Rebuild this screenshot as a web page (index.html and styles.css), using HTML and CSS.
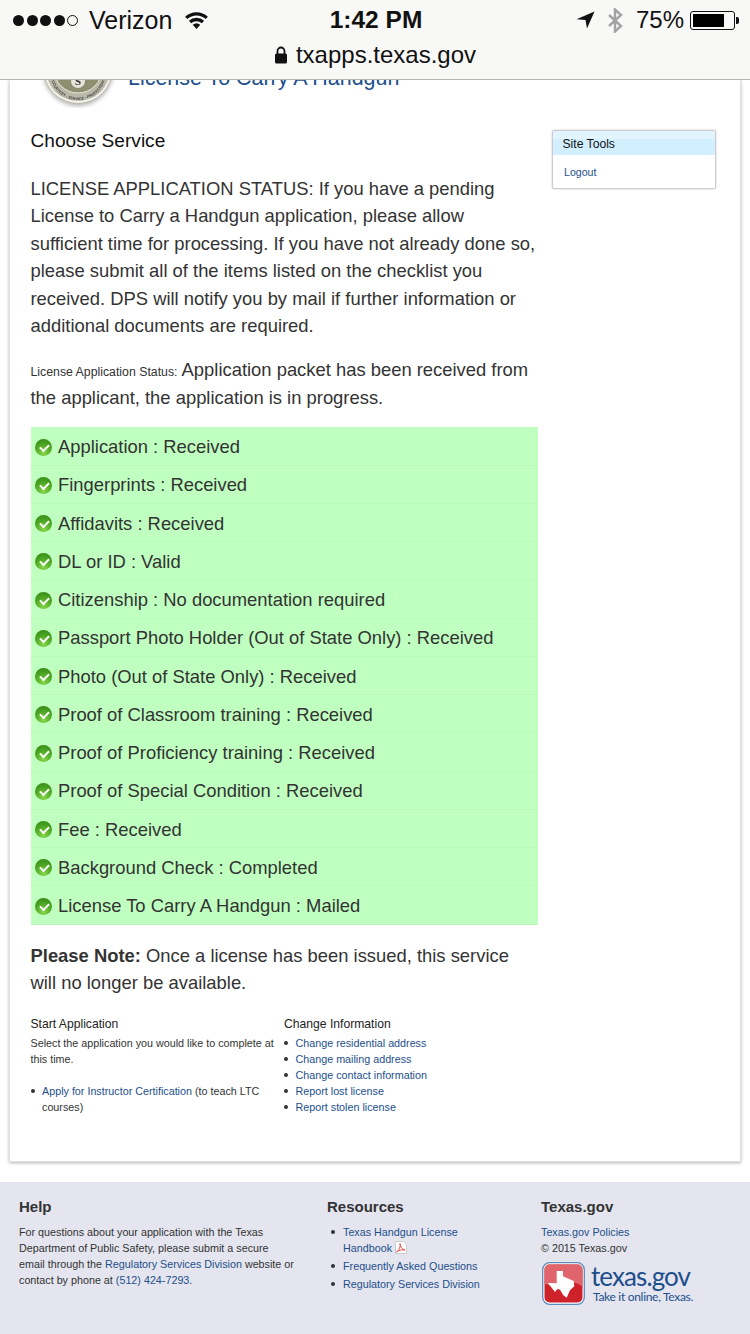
FILE: index.html
```html
<!DOCTYPE html>
<html lang="en">
<head>
<meta charset="utf-8">
<title>License To Carry A Handgun</title>
<link rel="stylesheet" href="styles.css">
</head>
<body>
<header class="chrome">
  <div class="status">
    <div class="status-left">
      <span class="signal"><i></i><i></i><i></i><i></i><i class="off"></i></span>
      <span class="carrier">Verizon</span>
      <svg class="wifi" width="25" height="19" viewBox="0 0 26 20"><path d="M13 19 9 14.600a6 6 0 0 1 8 0zM7.400 12.800 5 10.200a12 12 0 0 1 16 0l-2.400 2.600a8.500 8.500 0 0 0-11.200 0zM3.400 8.500 1 6a17.500 17.500 0 0 1 24 0l-2.400 2.500a14 14 0 0 0-19.200 0z" fill="#111"/></svg>
    </div>
    <div class="clock">1:42 PM</div>
    <div class="status-right">
      <svg class="arrow" width="19" height="18" viewBox="0 0 19 18"><path d="M18.500.500.500 8.200l9 .8 1.500 8.500z" fill="#111"/></svg>
      <svg class="bt" width="16" height="25" viewBox="0 0 16 25"><path d="M2 7 14 18 8 23.500V1.500l6 5.500L2 18" fill="none" stroke="#a3a3a3" stroke-width="2.400"/></svg>
      <span class="pct">75%</span>
      <span class="battery"><span class="charge"></span></span><span class="nub"></span>
    </div>
  </div>
  <div class="address">
    <svg width="14" height="18" viewBox="0 0 14 18"><path d="M3.500 8V5a3.500 3.500 0 0 1 7 0v3" fill="none" stroke="#111" stroke-width="1.800"/><rect x="1" y="7.500" width="12" height="10" rx="1.500" fill="#111"/></svg>
    <span>txapps.texas.gov</span>
  </div>
</header>

<main class="card">
  <div class="masthead">
    <svg class="seal" width="70" height="70" viewBox="0 0 70 70">
      <circle cx="35" cy="35" r="34.500" fill="#f2f2ea" stroke="#b9b9ac" stroke-width="1"/>
      <circle cx="35" cy="35" r="32" fill="#b9b9aa"/>
      <circle cx="35" cy="35" r="24" fill="#8c8f70" stroke="#e8e8dc" stroke-width="1"/>
      <path d="M35 16 40 37 58 29 43 46H27L12 29 30 37z" fill="#f0c23c"/>
      <circle cx="35" cy="47" r="7" fill="#e4e4da"/>
      <text x="35" y="51" class="seal-s">S</text>
      <path id="sealArc" d="M7 38a28 28 0 0 0 56 0" fill="none"/>
      <text class="seal-motto"><textPath href="#sealArc" startOffset="50%">COURTESY · SERVICE · PROTECTION</textPath></text>
    </svg>
    <h1 class="site-title">License To Carry A Handgun</h1>
  </div>

  <div class="columns">
    <div class="content">
      <h2 class="page-title">Choose Service</h2>
      <p class="lead">LICENSE APPLICATION STATUS: If you have a pending License to Carry a Handgun application, please allow sufficient time for processing. If you have not already done so, please submit all of the items listed on the checklist you received. DPS will notify you by mail if further information or additional documents are required.</p>
      <p class="status-line"><small>License Application Status:</small> Application packet has been received from the applicant, the application is in progress.</p>

      <ul class="checklist">
        <li><span class="tick"></span>Application : Received</li>
        <li><span class="tick"></span>Fingerprints : Received</li>
        <li><span class="tick"></span>Affidavits : Received</li>
        <li><span class="tick"></span>DL or ID : Valid</li>
        <li><span class="tick"></span>Citizenship : No documentation required</li>
        <li><span class="tick"></span>Passport Photo Holder (Out of State Only) : Received</li>
        <li><span class="tick"></span>Photo (Out of State Only) : Received</li>
        <li><span class="tick"></span>Proof of Classroom training : Received</li>
        <li><span class="tick"></span>Proof of Proficiency training : Received</li>
        <li><span class="tick"></span>Proof of Special Condition : Received</li>
        <li><span class="tick"></span>Fee : Received</li>
        <li><span class="tick"></span>Background Check : Completed</li>
        <li><span class="tick"></span>License To Carry A Handgun : Mailed</li>
      </ul>

      <p class="note"><strong>Please Note:</strong> Once a license has been issued, this service will no longer be available.</p>

      <div class="services">
        <section class="service">
          <h3>Start Application</h3>
          <p>Select the application you would like to complete at this time.</p>
          <ul class="links instructor">
            <li><a href="#">Apply for Instructor Certification</a> (to teach LTC courses)</li>
          </ul>
        </section>
        <section class="service">
          <h3>Change Information</h3>
          <ul class="links">
            <li><a href="#">Change residential address</a></li>
            <li><a href="#">Change mailing address</a></li>
            <li><a href="#">Change contact information</a></li>
            <li><a href="#">Report lost license</a></li>
            <li><a href="#">Report stolen license</a></li>
          </ul>
        </section>
      </div>
    </div>

    <aside class="tools">
      <h2>Site Tools</h2>
      <a href="#">Logout</a>
    </aside>
  </div>
</main>

<footer class="footer">
  <section class="foot-help">
    <h2>Help</h2>
    <p>For questions about your application with the Texas Department of Public Safety, please submit a secure email through the <a href="#">Regulatory Services Division</a> website or contact by phone at <a href="#">(512) 424-7293</a>.</p>
  </section>
  <section class="foot-res">
    <h2>Resources</h2>
    <ul class="links">
      <li><a href="#">Texas Handgun License Handbook</a>
        <svg class="pdf" width="12" height="13" viewBox="0 0 12 13"><path d="M.5.500h8l3 3v9H.5z" fill="#fff" stroke="#ccc"/><path d="M1.500 11C4 9.500 6 5 5 2.500c0 3 2 6 5 6.500-3-.5-6 0-8.500 2z" fill="none" stroke="#ea4c4c" stroke-width="1"/></svg>
      </li>
      <li><a href="#">Frequently Asked Questions</a></li>
      <li><a href="#">Regulatory Services Division</a></li>
    </ul>
  </section>
  <section class="foot-gov">
    <h2>Texas.gov</h2>
    <a href="#" class="policy">Texas.gov Policies</a>
    <div class="copy">© 2015 Texas.gov</div>
    <div class="brand">
      <svg class="brand-icon" width="43" height="43" viewBox="0 0 43 43">
        <rect x=".7" y=".7" width="41.600" height="41.600" rx="7" fill="#fff" stroke="#5b8dbd" stroke-width="1.300"/>
        <rect x="2.500" y="2.500" width="38" height="38" rx="5" fill="#cd2229"/>
        <path d="M2.500 7.500a5 5 0 0 1 5-5h28a5 5 0 0 1 5 5v17q-8-6-19-3.500T2.500 22z" fill="#e0646b"/>
        <path d="M14.700 9H21v5.300l10.700 4.700.6 5.300-4.300 4-3.300 7.400-3.400-2.400-3.300-5.600-2.300-1-2.700 3.300-3.300-4.300-4-4.700 9 .3z" fill="#fff"/>
      </svg>
      <div class="brand-text">
        <div class="brand-name">texas.gov</div>
        <div class="brand-tag">Take it online, Texas.</div>
      </div>
    </div>
  </section>
</footer>
</body>
</html>
```
FILE: styles.css
```css
* { box-sizing: border-box; }
html, body { margin: 0; padding: 0; }
body {
  width: 750px;
  height: 1334px;
  overflow: hidden;
  background: #fff;
  color: #333;
  font-family: "Liberation Sans", Arial, sans-serif;
}
h1, h2, h3, p, ul { margin: 0; padding: 0; }
a { color: #1c4f8c; text-decoration: none; }

/* browser chrome */
.chrome {
  height: 80px;
  background: #f8f8f7;
  border-bottom: 1px solid #b5b5b5;
  color: #111;
  position: relative;
  z-index: 2;
}
.status {
  height: 40px;
  padding: 0 11px 0 13px;
  display: grid;
  grid-template-columns: 1fr auto 1fr;
  align-items: center;
}
.status-left, .status-right { display: flex; align-items: center; }
.status-right { justify-content: flex-end; }
.signal { display: flex; gap: 2.500px; margin-right: 11px; }
.signal i { width: 11px; height: 11px; border-radius: 50%; background: #111; }
.signal i.off { background: none; border: 1px solid #111; }
.carrier { font-size: 25px; }
.wifi { margin-left: 12px; }
.clock { font-size: 24.500px; font-weight: 700; }
.arrow { margin-right: 12px; }
.bt { margin-right: 13px; }
.pct { font-size: 24px; margin-right: 6px; }
.battery {
  width: 45px; height: 19px;
  border: 1px solid #111; border-radius: 3px;
  padding: 2px;
  display: block;
}
.charge { display: block; width: 31px; height: 100%; background: #000; }
.nub { width: 3px; height: 7px; margin-left: 1px; background: #111; border-radius: 0 2px 2px 0; }
.address {
  height: 30px;
  display: flex; align-items: center; justify-content: center; gap: 8px;
  font-size: 24px;
}

/* card */
.card {
  width: 732px;
  height: 1082px;
  margin: 0 0 0 9px;
  background: #fff;
  border: 1px solid #e2e2e2;
  border-top: 0;
  box-shadow: 0 1px 3px rgba(0,0,0,.3);
}
.masthead {
  height: 28px;
  padding-left: 33px;
  display: flex;
  gap: 15px;
  overflow: hidden;
}
.seal { margin-top: -46px; flex: none; filter: drop-shadow(0 2px 2px rgba(0,0,0,.3)); }
.seal-s { font: 700 11px "Liberation Serif", serif; text-anchor: middle; fill: #333; }
.seal-motto { font: 700 3.800px "Liberation Sans", sans-serif; text-anchor: middle; fill: #444; }
.site-title {
  margin-top: -14px;
  font-size: 21.450px;
  font-weight: 400;
  line-height: 24px;
  color: #1c4f8c;
  white-space: nowrap;
}
.columns { display: flex; padding: 22px 0 0 20.500px; }
.content { width: 507px; flex: none; }
.page-title { font-size: 19.100px; font-weight: 400; line-height: 22px; color: #111; margin-bottom: 23px; }
.lead, .status-line, .note { font-size: 18.400px; line-height: 27.400px; }
.lead { margin-bottom: 17px; }
.status-line small { font-size: 12.300px; line-height: 1; }
.status-line { margin-bottom: 16px; }

.checklist { list-style: none; background: #bfffbf; }
.checklist li {
  height: 38.250px;
  display: flex;
  align-items: center;
  gap: 6.500px;
  padding: 2.400px 0 0 4px;
  font-size: 18.400px;
  white-space: nowrap;
  border-bottom: 1px solid #baf9ba;
}
.tick {
  flex: none;
  width: 17px; height: 17px;
  border-radius: 50%;
  background: radial-gradient(circle at 50% 85%, #86d64a 0, #4fa824 50%, #2f8413 100%);
  position: relative;
}
.tick::after {
  content: "";
  position: absolute;
  left: 5px; top: 5px;
  width: 7px; height: 4px;
  border-left: 2px solid #fff;
  border-bottom: 2px solid #fff;
  transform: rotate(-45deg);
}
.note { margin: 17px 0 19px; }
.services { display: grid; grid-template-columns: 253.500px 1fr; font-size: 10.750px; line-height: 16px; }
.service h3 { font-size: 12.150px; font-weight: 400; line-height: 18px; color: #222; margin-bottom: 2px; }
.links { list-style: none; }
.links li { position: relative; padding-left: 11.500px; }
.links li::before {
  content: "";
  position: absolute;
  left: 0; top: 6px;
  width: 4px; height: 4px;
  border-radius: 50%;
  background: #333;
}
.instructor { margin-top: 16px; }
.service:first-child .links { padding-right: 10px; }

.tools {
  width: 164px;
  height: 59px;
  margin: 0 0 0 14.500px;
  border: 1px solid #ccc;
  box-shadow: 0 0 2px rgba(0,0,0,.25);
  background: #fff;
  border-radius: 2px;
  font-size: 10.600px;
}
.tools h2 {
  height: 24px;
  padding: 6px 0 0 9.500px;
  font-size: 12.150px;
  font-weight: 400;
  line-height: 14px;
  color: #111;
  background: linear-gradient(#e2f4fe 0 8px, #d1effe 8px);
}
.tools a { display: block; padding: 10px 0 0 11px; line-height: 14px; }

/* footer */
.footer {
  margin-top: 20px;
  height: 152px;
  background: #e4e5ee;
  display: grid;
  grid-template-columns: 308px 214px 1fr;
  padding: 15px 0 0 19px;
  font-size: 10.750px;
  line-height: 16px;
}
.footer h2 { font-size: 15px; font-weight: 700; line-height: 20px; color: #333; margin-bottom: 7px; }
.foot-help p { width: 277px; }
.foot-res .links { padding-left: 4px; }
.foot-res .links li { padding-left: 12px; margin-bottom: 2px; width: 162px; }
.pdf { vertical-align: -2px; }
.foot-gov .policy, .foot-gov .copy { display: block; }
.brand { display: flex; gap: 6px; margin-top: 6px; margin-left: 1px; }
.brand-icon { flex: none; }
.brand-text { color: #1c4f8c; padding-top: 1px; }
.brand-name { font: 400 26px/26px "Lato", sans-serif; letter-spacing: -.9px; }
.brand-tag { font: 400 12px/14px "Lato", sans-serif; letter-spacing: -.3px; padding-left: 2px; margin-top: 1px; }
```
